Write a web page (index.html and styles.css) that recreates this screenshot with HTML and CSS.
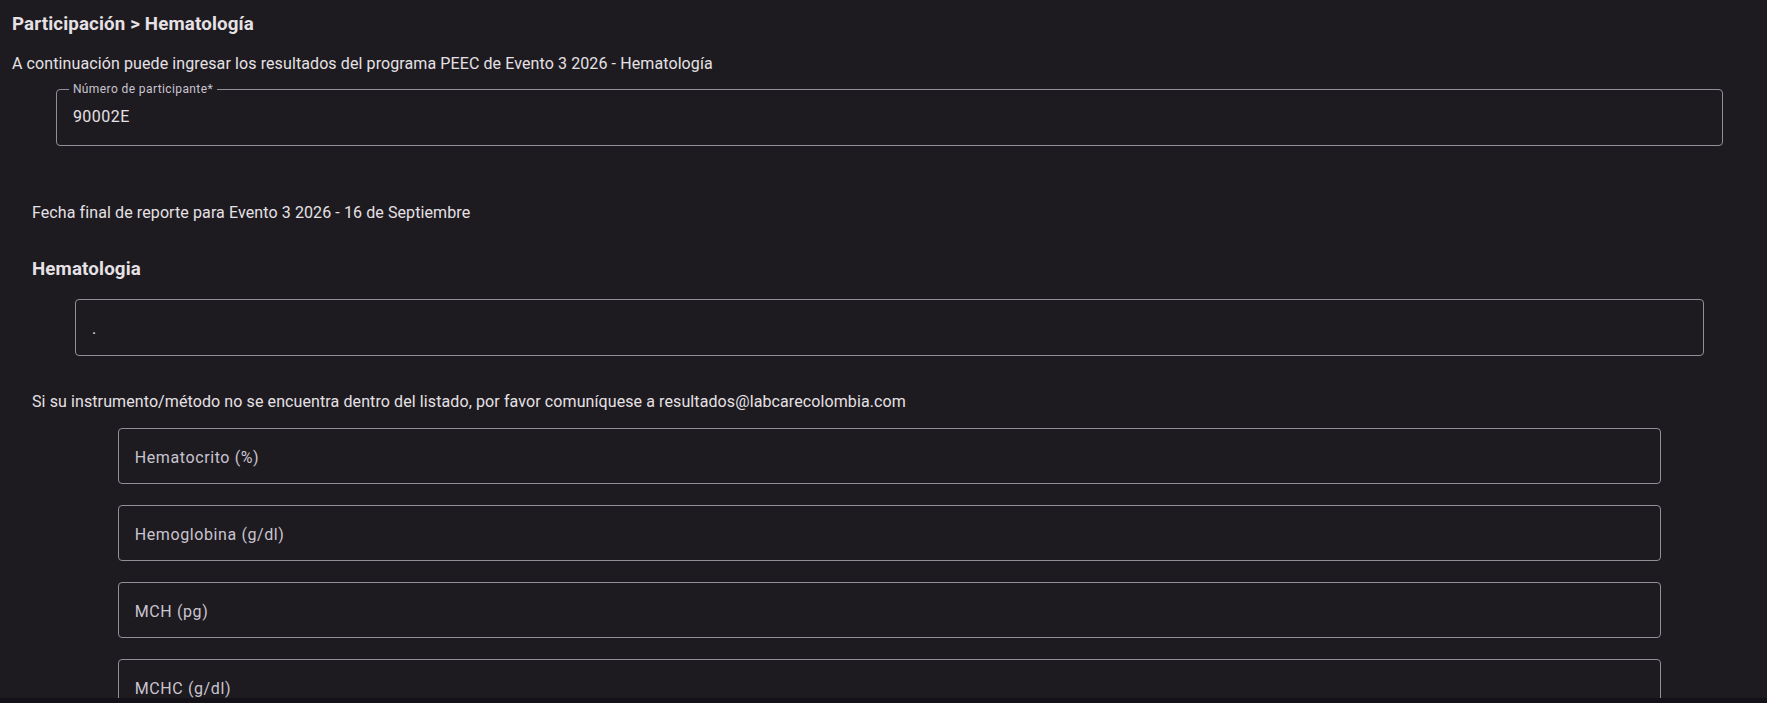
FILE: index.html
```html
<!DOCTYPE html>
<html lang="es">
<head>
<meta charset="utf-8">
<title>Participación - Hematología</title>
<link rel="stylesheet" href="styles.css">
</head>
<body>
<main class="page">
  <h1 class="title">Participación &gt; Hematología</h1>
  <p class="intro">A continuación puede ingresar los resultados del programa PEEC de Evento 3 2026 - Hematología</p>
  <fieldset class="outlined participant">
    <legend class="legend">Número de participante*</legend>
    <div class="value">90002E</div>
  </fieldset>

  <section class="section">
    <p class="deadline">Fecha final de reporte para Evento 3 2026 - 16 de Septiembre</p>
    <h2 class="subtitle">Hematologia</h2>
    <div class="box instrument"><span class="box-text">.</span></div>
    <p class="note">Si su instrumento/método no se encuentra dentro del listado, por favor comuníquese a resultados@labcarecolombia.com</p>
    <div class="fields">
      <div class="box field"><span class="label">Hematocrito (%)</span></div>
      <div class="box field"><span class="label">Hemoglobina (g/dl)</span></div>
      <div class="box field"><span class="label">MCH (pg)</span></div>
      <div class="box field"><span class="label">MCHC (g/dl)</span></div>
      <div class="box field"><span class="label">MCV (fl)</span></div>
    </div>
  </section>
</main>
<div class="bottom-strip"></div>
</body>
</html>
```
FILE: styles.css
```css
html, body {
  margin: 0;
  height: 100%;
  overflow: hidden;
}
body {
  background: #1d1b20;
  color: #e6e1e5;
  font-family: Roboto, "Noto Sans", "Liberation Sans", sans-serif;
  font-size: 16px;
  letter-spacing: 0.1px;
}
.page {
  padding: 13px 0 0 12px;
}
.title {
  margin: 0;
  font-size: 18.72px;
  line-height: 22px;
  font-weight: 700;
  letter-spacing: 0.15px;
}
.intro {
  margin: 17px 0 0;
  line-height: 24px;
}
.outlined {
  border: 1px solid #938f99;
  border-radius: 4px;
  min-width: 0;
}
.participant {
  box-sizing: border-box;
  width: 95%;
  margin: 5px auto 0;
  padding: 0 16px 16px;
}
.legend {
  margin-left: -4px;
  padding: 0 4px;
  font-size: 12px;
  line-height: 16px;
  letter-spacing: 0.4px;
  color: #cac4d0;
}
.value {
  margin-top: 8px;
  line-height: 24px;
  letter-spacing: 0.5px;
}
.section {
  padding: 0 20px;
}
.deadline {
  margin: 55px 0 0;
  line-height: 24px;
}
.subtitle {
  margin: 33px 0 0;
  font-size: 18.72px;
  line-height: 22px;
  font-weight: 700;
  letter-spacing: 0.15px;
}
.box {
  box-sizing: border-box;
  height: 56px;
  border: 1px solid #938f99;
  border-radius: 4px;
  padding: 16px 16px 0;
  line-height: 24px;
  margin-left: auto;
  margin-right: auto;
}
.instrument {
  width: 95%;
  height: 57px;
  margin-top: 19px;
  padding-top: 17px;
}
.box-text {
  color: #e6e1e5;
}
.note {
  margin: 34px 0 0;
  line-height: 24px;
}
.fields {
  display: flex;
  flex-direction: column;
  gap: 21px;
  margin-top: 14px;
}
.field {
  width: 90%;
  padding-top: 17px;
}
.label {
  color: #cac4d0;
  letter-spacing: 0.6px;
}
.bottom-strip {
  position: fixed;
  left: 0;
  right: 0;
  bottom: 0;
  height: 5px;
  background: #141218;
}
```
